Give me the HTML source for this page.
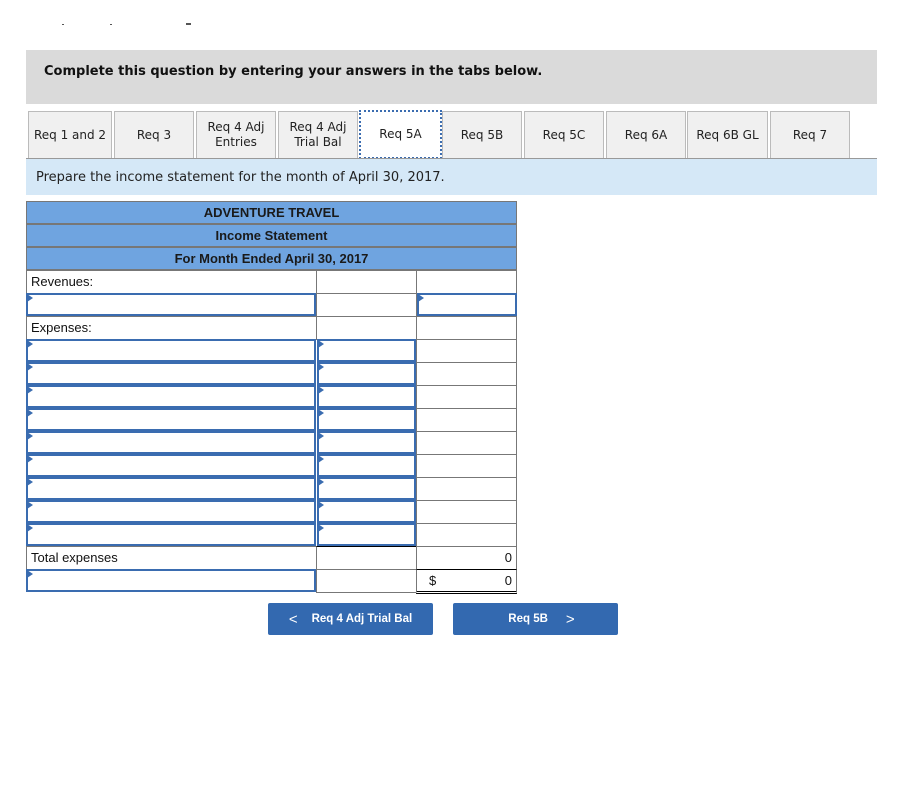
<!DOCTYPE html>
<html><head><meta charset="utf-8"><style>
body{margin:0;width:900px;height:806px;background:#fff;position:relative;font-family:"Liberation Sans",Arial,sans-serif;overflow:hidden}
.a{position:absolute;box-sizing:border-box}
.tab{position:absolute;top:111px;height:47px;background:#f0f0f0;border:1px solid #bbb;border-bottom:none;font-family:"DejaVu Sans",Verdana,sans-serif;font-size:12px;color:#222;display:flex;align-items:center;justify-content:center;text-align:center;line-height:15px;box-sizing:border-box}
.c{position:absolute;box-sizing:border-box;border:1px solid #777;background:#fff;font-size:13px;color:#111;padding-left:4px;line-height:21px}
.in{position:absolute;box-sizing:border-box;border:2px solid #3a6cb0;background:#fff}
.in:before{content:"";position:absolute;left:-1px;top:-1px;border-left:6px solid #3a6cb0;border-top:4px solid transparent;border-bottom:4px solid transparent}
.h{position:absolute;left:26px;width:491px;height:23px;background:#6fa4e0;border:1px solid #777;box-sizing:border-box;text-align:center;font-weight:bold;font-size:13px;line-height:21px;color:#1a1a1a}
.btn{position:absolute;top:603px;height:32px;width:165px;background:#3369b0;border-radius:2px;color:#fff;font-weight:bold;font-size:11.5px;display:flex;align-items:center;justify-content:center}
</style></head><body>
<div class="a" style="left:62px;top:24px;width:2px;height:1px;background:#555"></div>
<div class="a" style="left:110px;top:24px;width:2px;height:1px;background:#555"></div>
<div class="a" style="left:186px;top:23px;width:5px;height:2px;background:#555"></div>
<div class="a" style="left:26px;top:50px;width:851px;height:54px;background:#dadada"></div>
<div class="a" style="left:44px;top:64px;font-family:'DejaVu Sans',Verdana,sans-serif;font-weight:bold;font-size:13px;color:#111">Complete this question by entering your answers in the tabs below.</div>
<div class="tab" style="left:28px;width:84px">Req 1 and 2</div>
<div class="tab" style="left:114px;width:80px">Req 3</div>
<div class="tab" style="left:196px;width:80px">Req 4 Adj<br>Entries</div>
<div class="tab" style="left:278px;width:80px">Req 4 Adj<br>Trial Bal</div>
<div class="tab" style="left:359px;width:83px;top:110px;height:49px;background:#fff;border:2px dotted #3a6cb0">Req 5A</div>
<div class="tab" style="left:442px;width:80px">Req 5B</div>
<div class="tab" style="left:524px;width:80px">Req 5C</div>
<div class="tab" style="left:606px;width:80px">Req 6A</div>
<div class="tab" style="left:687px;width:81px">Req 6B GL</div>
<div class="tab" style="left:770px;width:80px">Req 7</div>
<div class="a" style="left:26px;top:158px;width:851px;height:1px;background:#999"></div>
<div class="a" style="left:26px;top:159px;width:851px;height:36px;background:#d5e8f7"></div>
<div class="a" style="left:36px;top:170px;font-family:'DejaVu Sans',Verdana,sans-serif;font-size:13px;color:#222">Prepare the income statement for the month of April 30, 2017.</div>
<div class="h" style="top:201px">ADVENTURE TRAVEL</div>
<div class="h" style="top:224px">Income Statement</div>
<div class="h" style="top:247px">For Month Ended April 30, 2017</div>
<div class="c" style="left:26px;top:270px;width:291px;height:24px">Revenues:</div>
<div class="c" style="left:316px;top:270px;width:101px;height:24px"></div>
<div class="c" style="left:416px;top:270px;width:101px;height:24px"></div>
<div class="in" style="left:26px;top:293px;width:290px;height:23px"></div>
<div class="c" style="left:316px;top:293px;width:101px;height:24px"></div>
<div class="in" style="left:417px;top:293px;width:100px;height:23px"></div>
<div class="c" style="left:26px;top:316px;width:291px;height:24px">Expenses:</div>
<div class="c" style="left:316px;top:316px;width:101px;height:24px"></div>
<div class="c" style="left:416px;top:316px;width:101px;height:24px"></div>
<div class="in" style="left:26px;top:339px;width:290px;height:23px"></div><div class="in" style="left:317px;top:339px;width:99px;height:23px"></div><div class="c" style="left:416px;top:339px;width:101px;height:24px"></div>
<div class="in" style="left:26px;top:362px;width:290px;height:23px"></div><div class="in" style="left:317px;top:362px;width:99px;height:23px"></div><div class="c" style="left:416px;top:362px;width:101px;height:24px"></div>
<div class="in" style="left:26px;top:385px;width:290px;height:23px"></div><div class="in" style="left:317px;top:385px;width:99px;height:23px"></div><div class="c" style="left:416px;top:385px;width:101px;height:24px"></div>
<div class="in" style="left:26px;top:408px;width:290px;height:23px"></div><div class="in" style="left:317px;top:408px;width:99px;height:23px"></div><div class="c" style="left:416px;top:408px;width:101px;height:24px"></div>
<div class="in" style="left:26px;top:431px;width:290px;height:23px"></div><div class="in" style="left:317px;top:431px;width:99px;height:23px"></div><div class="c" style="left:416px;top:431px;width:101px;height:24px"></div>
<div class="in" style="left:26px;top:454px;width:290px;height:23px"></div><div class="in" style="left:317px;top:454px;width:99px;height:23px"></div><div class="c" style="left:416px;top:454px;width:101px;height:24px"></div>
<div class="in" style="left:26px;top:477px;width:290px;height:23px"></div><div class="in" style="left:317px;top:477px;width:99px;height:23px"></div><div class="c" style="left:416px;top:477px;width:101px;height:24px"></div>
<div class="in" style="left:26px;top:500px;width:290px;height:23px"></div><div class="in" style="left:317px;top:500px;width:99px;height:23px"></div><div class="c" style="left:416px;top:500px;width:101px;height:24px"></div>
<div class="in" style="left:26px;top:523px;width:290px;height:23px"></div><div class="in" style="left:317px;top:523px;width:99px;height:23px"></div><div class="c" style="left:416px;top:523px;width:101px;height:24px"></div>
<div class="c" style="left:26px;top:546px;width:291px;height:24px">Total expenses</div>
<div class="c" style="left:316px;top:546px;width:101px;height:24px;border-top:1px solid #000"></div>
<div class="c" style="left:416px;top:546px;width:101px;height:24px;text-align:right;padding-right:4px">0</div>
<div class="in" style="left:26px;top:569px;width:290px;height:23px"></div>
<div class="c" style="left:316px;top:569px;width:101px;height:24px"></div>
<div class="c" style="left:416px;top:569px;width:101px;height:24px;border-top:1px solid #000;border-bottom:3px double #000;text-align:right;padding-right:4px;height:25px"><span style="position:absolute;left:12px">$</span>0</div>
<div class="btn" style="left:268px"><span style="font-size:15px;margin-right:14px;font-weight:normal">&lt;</span>Req 4 Adj Trial Bal</div>
<div class="btn" style="left:453px"><span style="margin-left:12px">Req 5B</span><span style="font-size:15px;margin-left:18px;font-weight:normal">&gt;</span></div>
</body></html>
